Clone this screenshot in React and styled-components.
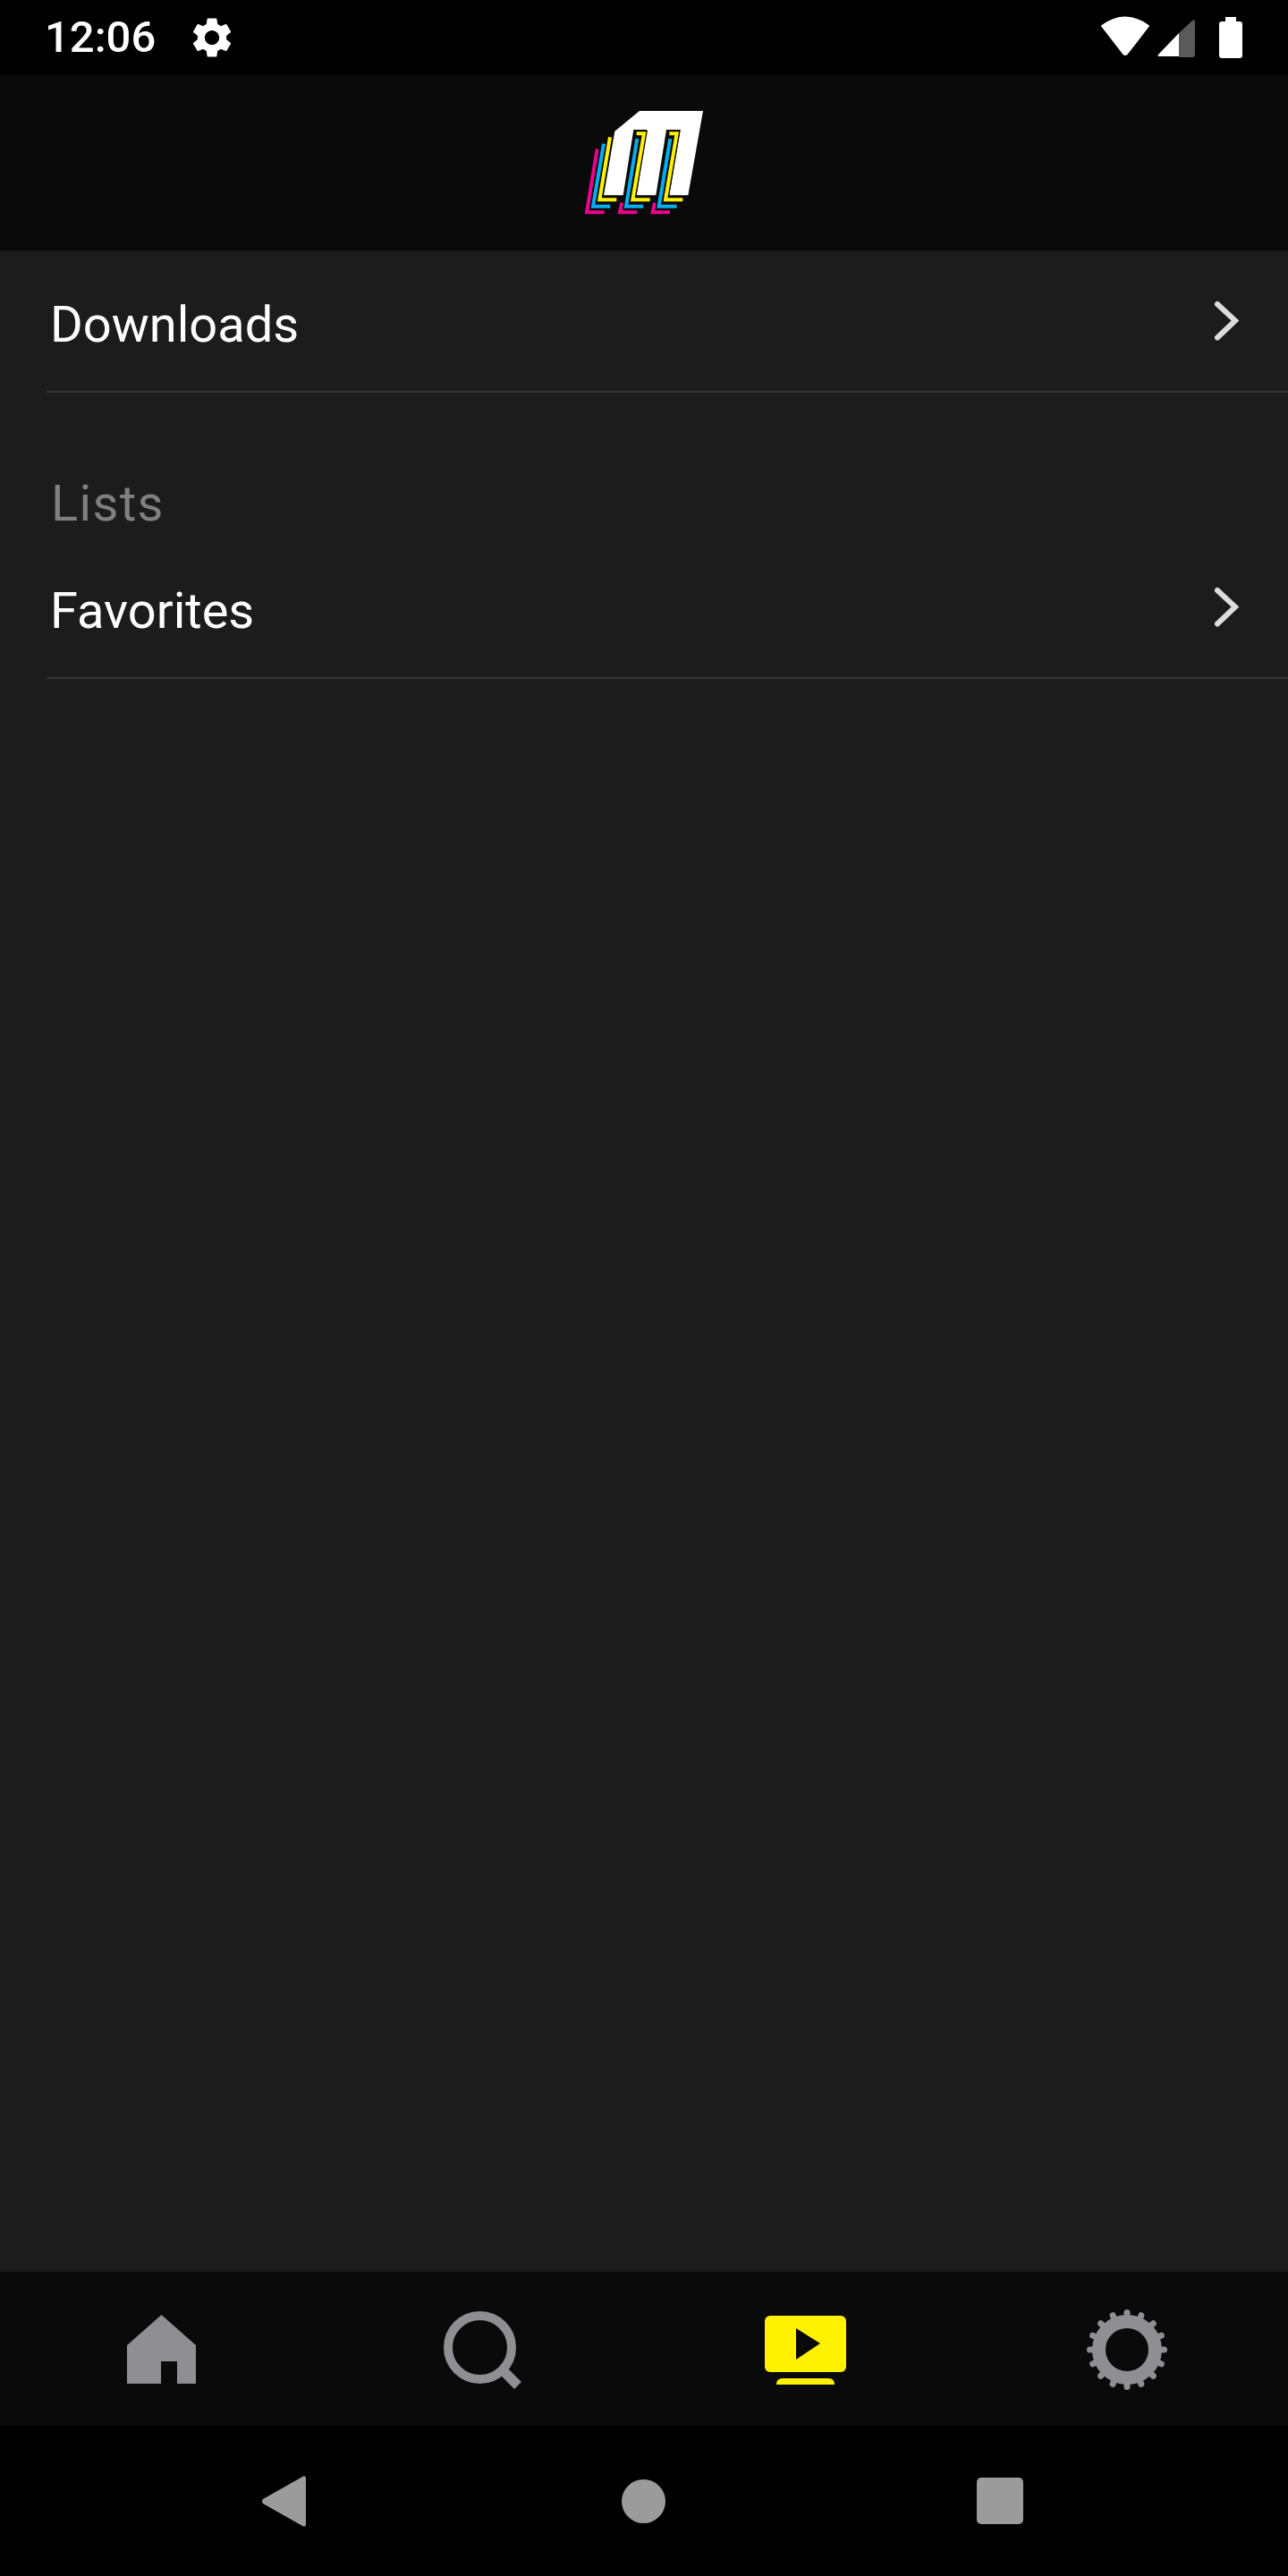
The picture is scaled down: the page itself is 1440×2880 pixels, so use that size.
import React from "react";
import styled, { createGlobalStyle } from "styled-components";
import { MdSettings } from "react-icons/md";

const Global = createGlobalStyle`
  html, body { margin: 0; padding: 0; background: #000; }
  * { box-sizing: border-box; }
`;

const Screen = styled.div`
  width: 1440px;
  height: 2880px;
  display: flex;
  flex-direction: column;
  background: #1c1c1c;
  overflow: hidden;
`;

const StatusBar = styled.div`
  height: 84px;
  flex: none;
  background: #000;
  display: flex;
  align-items: center;
  padding: 0 0 0 50px;
  color: #fff;
`;

const Clock = styled.span`
  font-family: Roboto, sans-serif;
  font-weight: 500;
  font-size: 49px;
  line-height: 84px;
  width: 160px;
`;

const StatusIcons = styled.svg`
  margin-left: auto;
  display: block;
`;

const Header = styled.header`
  height: 196px;
  flex: none;
  background: #0a0a0a;
  display: flex;
  align-items: flex-start;
  justify-content: center;
  padding: 26px 0 0 0;
`;

const Logo = styled.svg`
  display: block;
  margin-left: -1px;
`;

const Content = styled.main`
  flex: 1;
  display: flex;
  flex-direction: column;
  padding-left: 54px;
`;

const Row = styled.div`
  height: ${(p) => p.$height}px;
  display: flex;
  align-items: flex-end;
  justify-content: space-between;
  margin-left: -2px;
  padding: 0 0 39px 4px;
  border-bottom: 2px solid #343434;
  color: #fff;
`;

const RowLabel = styled.span`
  font-family: Roboto, sans-serif;
  font-size: 56px;
  line-height: 70px;
`;

const Chevron = styled.svg`
  display: block;
  margin: 0 52px 15px 0;
`;

const SectionTitle = styled.h2`
  margin: 0;
  height: 160px;
  padding: 89px 0 0 3px;
  font-family: Roboto, sans-serif;
  font-weight: 400;
  font-size: 56px;
  line-height: 70px;
  letter-spacing: 1.4px;
  color: #7f7f7f;
`;

const TabBar = styled.nav`
  height: 172px;
  flex: none;
  background: #0a0a0a;
  display: grid;
  grid-template-columns: repeat(4, 1fr);
  align-items: center;
`;

const Tab = styled.div`
  display: flex;
  justify-content: center;
  align-items: center;
  padding-top: ${(p) => p.$nudge || 0}px;
  svg { display: block; }
`;

const SystemNav = styled.div`
  height: 168px;
  flex: none;
  background: #000;
  display: flex;
  align-items: center;
  padding: 0 0 0 293px;
  svg { display: block; }
`;

const NavButton = styled.div`
  margin-left: ${(p) => p.$gap || 0}px;
`;

const ROWS = { downloads: "Downloads", favorites: "Favorites" };

function ChevronIcon() {
  return (
    <Chevron width="32" height="48" viewBox="0 0 32 48">
      <path d="M5 5 L25 23.5 L5 42.5" fill="none" stroke="#dcdcdc" strokeWidth="6" strokeLinecap="round" strokeLinejoin="miter" />
    </Chevron>
  );
}

function Ell({ d, color }) {
  return (
    <>
      <path d={d} fill="none" stroke="#0a0a0a" strokeWidth="20" />
      <path d={d} fill="none" stroke={color} strokeWidth="12" />
    </>
  );
}

function BrandLogo() {
  return (
    <Logo width="180" height="140" viewBox="0 0 540 420">
      <path
        fill="#fff"
        d="M255 42 H468 L418 325 H355 L392 105 H345 L310 325 H245 L280 105 H235 L200 325 H135 L172 110 Z"
      />
      <Ell color="#ec008c" d="M113 170 L78 382 H137" />
      <Ell color="#ec008c" d="M196 350 L189 382 H247" />
      <Ell color="#ec008c" d="M306 350 L299 382 H357" />
      <Ell color="#00aeef" d="M135 152 L99 362 H157" />
      <Ell color="#00aeef" d="M247 135 L210 362 H268" />
      <Ell color="#00aeef" d="M358 135 L320 362 H380" />
      <Ell color="#fff200" d="M156 130 L121 340 H178" />
      <Ell color="#fff200" d="M245 118 H270 L232 340 H290" />
      <Ell color="#fff200" d="M355 118 H380 L342 340 H400" />
    </Logo>
  );
}

function CellIcons() {
  return (
    <StatusIcons width="240" height="84" viewBox="0 0 240 84">
      <path fill="#fff" d="M32 29 Q58 10 84 29 L60 60 Q58 62 56 60 Z" stroke="#fff" strokeWidth="2" strokeLinejoin="round" />
      <path fill="#fff" d="M118 37 V63 H95 Q94 63 95 61 Z" />
      <path fill="#5a5a5a" d="M118 37 L133 23 Q136 21 136 24 V61 Q136 64 133 64 H118 Z" />
      <path fill="#fff" d="M170 19 H182 V24 H186 Q189 24 189 27 V62 Q189 65 186 65 H166 Q163 65 163 62 V27 Q163 24 166 24 H170 Z" />
    </StatusIcons>
  );
}

function HomeIcon() {
  return (
    <svg width="77" height="77" viewBox="0 0 77 77">
      <path fill="#8e8e93" d="M38.5 0 L77 34 V77 H56 V52 H38 V77 H0 V34 Z" />
    </svg>
  );
}

function SearchIcon() {
  return (
    <svg width="88" height="88" viewBox="0 0 88 88">
      <circle cx="40.5" cy="40.5" r="35.5" fill="none" stroke="#8e8e93" strokeWidth="10" />
      <path d="M65 65 L83 83" stroke="#8e8e93" strokeWidth="11" fill="none" />
    </svg>
  );
}

function PlayIcon() {
  return (
    <svg width="91" height="78" viewBox="0 0 91 78">
      <rect width="91" height="63" rx="6" fill="#fff200" />
      <path fill="#0a0a0a" d="M35 14 L62 31 L35 49 Z" />
      <path fill="#fff200" d="M13 77 Q13 70 20 70 H71 Q78 70 78 77 Z" />
    </svg>
  );
}

function GearIcon() {
  const teeth = Array.from({ length: 16 }, (_, i) => (i * Math.PI) / 8);
  return (
    <svg width="92" height="92" viewBox="0 0 92 92">
      <circle cx="46" cy="46" r="31.5" fill="none" stroke="#8e8e93" strokeWidth="15" />
      {teeth.map((a) => (
        <line
          key={a}
          x1={46 + 36 * Math.cos(a)}
          y1={46 + 36 * Math.sin(a)}
          x2={46 + 41.5 * Math.cos(a)}
          y2={46 + 41.5 * Math.sin(a)}
          stroke="#8e8e93"
          strokeWidth="7"
          strokeLinecap="round"
        />
      ))}
    </svg>
  );
}

export default function App() {
  return (
    <Screen>
      <Global />
      <StatusBar>
        <Clock>12:06</Clock>
        <MdSettings size={54} color="#fff" />
        <CellIcons />
      </StatusBar>
      <Header>
        <BrandLogo />
      </Header>
      <Content>
        <Row $height={159}>
          <RowLabel>{ROWS.downloads}</RowLabel>
          <ChevronIcon />
        </Row>
        <SectionTitle>Lists</SectionTitle>
        <Row $height={160}>
          <RowLabel>{ROWS.favorites}</RowLabel>
          <ChevronIcon />
        </Row>
      </Content>
      <TabBar>
        <Tab $nudge={1}><HomeIcon /></Tab>
        <Tab $nudge={3}><SearchIcon /></Tab>
        <Tab $nudge={3}><PlayIcon /></Tab>
        <Tab $nudge={2}><GearIcon /></Tab>
      </TabBar>
      <SystemNav>
        <NavButton>
          <svg width="49" height="57" viewBox="0 0 49 57">
            <path fill="#9b9b9b" d="M46 0.5 Q49 -0.5 49 3 V54 Q49 57.5 46 56.5 L1 31 Q-1 28.5 1 26 Z" />
          </svg>
        </NavButton>
        <NavButton $gap={353}>
          <svg width="49" height="49" viewBox="0 0 49 49">
            <circle cx="24.5" cy="24.5" r="24.5" fill="#9b9b9b" />
          </svg>
        </NavButton>
        <NavButton $gap={348}>
          <svg width="52" height="52" viewBox="0 0 52 52">
            <rect width="52" height="52" rx="5" fill="#9b9b9b" />
          </svg>
        </NavButton>
      </SystemNav>
    </Screen>
  );
}
